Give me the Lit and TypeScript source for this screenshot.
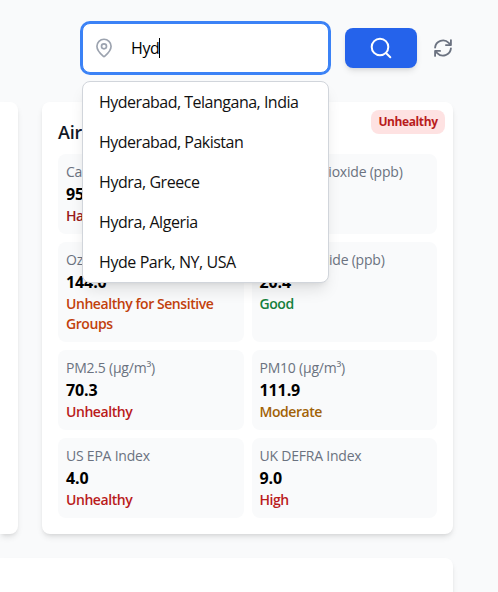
import { LitElement, html, css, svg } from "lit";
import { customElement, property } from "lit/decorators.js";

type Level = "hazard" | "bad" | "sensitive" | "moderate" | "good";

interface Reading {
  label: string;
  value: string;
  status: string;
  level: Level;
}

const READINGS: Reading[] = [
  { label: "Carbon Monoxide (ppb)", value: "950.0", status: "Hazardous", level: "hazard" },
  { label: "Nitrogen Dioxide (ppb)", value: "42.1", status: "Good", level: "good" },
  { label: "Ozone (ppb)", value: "144.0", status: "Unhealthy for Sensitive Groups", level: "sensitive" },
  { label: "Sulfur Dioxide (ppb)", value: "20.4", status: "Good", level: "good" },
  { label: "PM2.5 (µg/m³)", value: "70.3", status: "Unhealthy", level: "bad" },
  { label: "PM10 (µg/m³)", value: "111.9", status: "Moderate", level: "moderate" },
  { label: "US EPA Index", value: "4.0", status: "Unhealthy", level: "bad" },
  { label: "UK DEFRA Index", value: "9.0", status: "High", level: "bad" },
];

const PLACES = [
  "Hyderabad, Telangana, India",
  "Hyderabad, Pakistan",
  "Hydra, Greece",
  "Hydra, Algeria",
  "Hyde Park, NY, USA",
];

@customElement("aq-tile")
class AqTile extends LitElement {
  @property({ attribute: false }) reading!: Reading;

  static styles = css`
    :host { display: block; box-sizing: border-box; padding: 8px; border-radius: 8px; background: #f9fafb; min-width: 0; }
    .label { font-size: 14px; line-height: 20px; color: #6b7280; white-space: nowrap; letter-spacing: -0.22px; }
    .value { font-size: 16px; line-height: 24px; font-weight: 700; color: #000; letter-spacing: -0.1px; }
    .status { font-size: 14px; line-height: 20px; font-weight: 600; letter-spacing: -0.44px; }
    .hazard { color: #991b1b; }
    .bad { color: #b91c1c; }
    .sensitive { color: #c2410c; }
    .moderate { color: #a16207; }
    .good { color: #15803d; }
  `;

  render() {
    const r = this.reading;
    return html`
      <div class="label">${r.label}</div>
      <div class="value">${r.value}</div>
      <div class="status ${r.level}">${r.status}</div>
    `;
  }
}

@customElement("place-search")
class PlaceSearch extends LitElement {
  static styles = css`
    :host { display: flex; align-items: center; height: 50px; }
    .field { position: relative; width: 247px; }
    .input { box-sizing: border-box; height: 50px; display: flex; align-items: center; padding: 0 11px; border: 1px solid #3b82f6; border-radius: 8px; background: #fff; box-shadow: 0 0 0 2px #3b82f6; font-size: 16px; line-height: 24px; color: #000; }
    .pin { width: 20px; height: 20px; color: #9ca3af; margin-right: 17px; }
    .typed { letter-spacing: -0.4px; }
    .caret { width: 1px; height: 20px; background: #000; }
    .menu { position: absolute; z-index: 2; top: 58px; left: 0; right: 0; border: 1px solid #d1d5db; border-radius: 8px; background: #fff; box-shadow: 0 10px 15px -3px rgba(0,0,0,.1), 0 4px 6px -4px rgba(0,0,0,.1); }
    .item { padding: 8px 16px; line-height: 24px; font-size: 16px; color: #111; white-space: nowrap; letter-spacing: -0.5px; }
    .item:nth-child(n+3) { letter-spacing: -0.42px; }
    .go { display: flex; align-items: center; justify-content: center; width: 72px; height: 40px; margin-left: 16px; border-radius: 8px; background: #2563eb; color: #fff; box-shadow: 0 4px 6px -1px rgba(0,0,0,.1), 0 2px 4px -2px rgba(0,0,0,.1); }
    .go svg { width: 24px; height: 24px; }
    .refresh { width: 20px; height: 20px; margin-left: 16px; color: #6b7280; }
    svg { display: block; flex: none; fill: none; stroke: currentColor; stroke-linecap: round; stroke-linejoin: round; }
  `;

  render() {
    return html`
      <div class="field">
        <div class="input">
          <svg class="pin" viewBox="0 0 24 24" stroke-width="2">
            ${svg`<path d="M20.5 10c0 4.993-5.6 10.193-7.5 11.799a1.5 1.5 0 0 1-2 0C9.1 20.193 3.500 14.993 3.500 10a8.500 8.500 0 0 1 17 0"/><circle cx="12" cy="10" r="3"/>`}
          </svg>
          <span class="typed">Hyd</span><span class="caret"></span>
        </div>
        <div class="menu">${PLACES.map((p) => html`<div class="item">${p}</div>`)}</div>
      </div>
      <div class="go">
        <svg viewBox="0 0 24 24" stroke-width="2">
          <circle cx="11" cy="11" r="8.3" /><path d="m21.3 21.3-4.35-4.35" />
        </svg>
      </div>
      <svg class="refresh" viewBox="0 0 24 24" stroke-width="2.2">
        <path d="M2.5 11.5a9.5 9.5 0 0 1 16.4-5.600L21.5 8.5M21.5 2.5v6h-6M21.5 12.5a9.5 9.5 0 0 1-16.4 5.600L2.5 15.5M8.5 15.5h-6v6" />
      </svg>
    `;
  }
}

@customElement("app-root")
class AppRoot extends LitElement {
  static styles = css`
    :host { display: block; box-sizing: border-box; height: 592px; overflow: hidden; background: #f9fafb; font-family: "Open Sans", "Noto Sans", sans-serif; }
    .top { padding: 23px 0 0 82px; }
    .row { display: flex; gap: 24px; margin-top: 29px; }
    .card { position: relative; box-sizing: border-box; background: #fff; box-shadow: 0 4px 6px -1px rgba(0,0,0,.1), 0 2px 4px -2px rgba(0,0,0,.1); }
    .side { width: 18px; border-radius: 0 8px 8px 0; }
    .air { width: 411px; padding: 16px; border-radius: 8px; }
    .title { font-size: 18px; line-height: 28px; font-weight: 600; color: #111827; margin: 0 0 8px; letter-spacing: -0.2px; }
    .badge { position: absolute; top: 8px; right: 8px; width: 74px; text-align: center; padding: 4px 0; border-radius: 8px; background: #fee2e2; color: #b91c1c; font-size: 12px; line-height: 16px; font-weight: 700; letter-spacing: -0.4px; }
    .grid { display: grid; grid-template-columns: 1fr 1fr; gap: 8px; }
    .below { width: 453px; height: 80px; margin-top: 24px; border-radius: 0 8px 0 0; }
  `;

  render() {
    return html`
      <place-search class="top"></place-search>
      <div class="row">
        <div class="card side"></div>
        <div class="card air">
          <h2 class="title">Air Quality</h2>
          <div class="badge">Unhealthy</div>
          <div class="grid">${READINGS.map((r) => html`<aq-tile .reading=${r}></aq-tile>`)}</div>
        </div>
      </div>
      <div class="card below"></div>
    `;
  }
}
